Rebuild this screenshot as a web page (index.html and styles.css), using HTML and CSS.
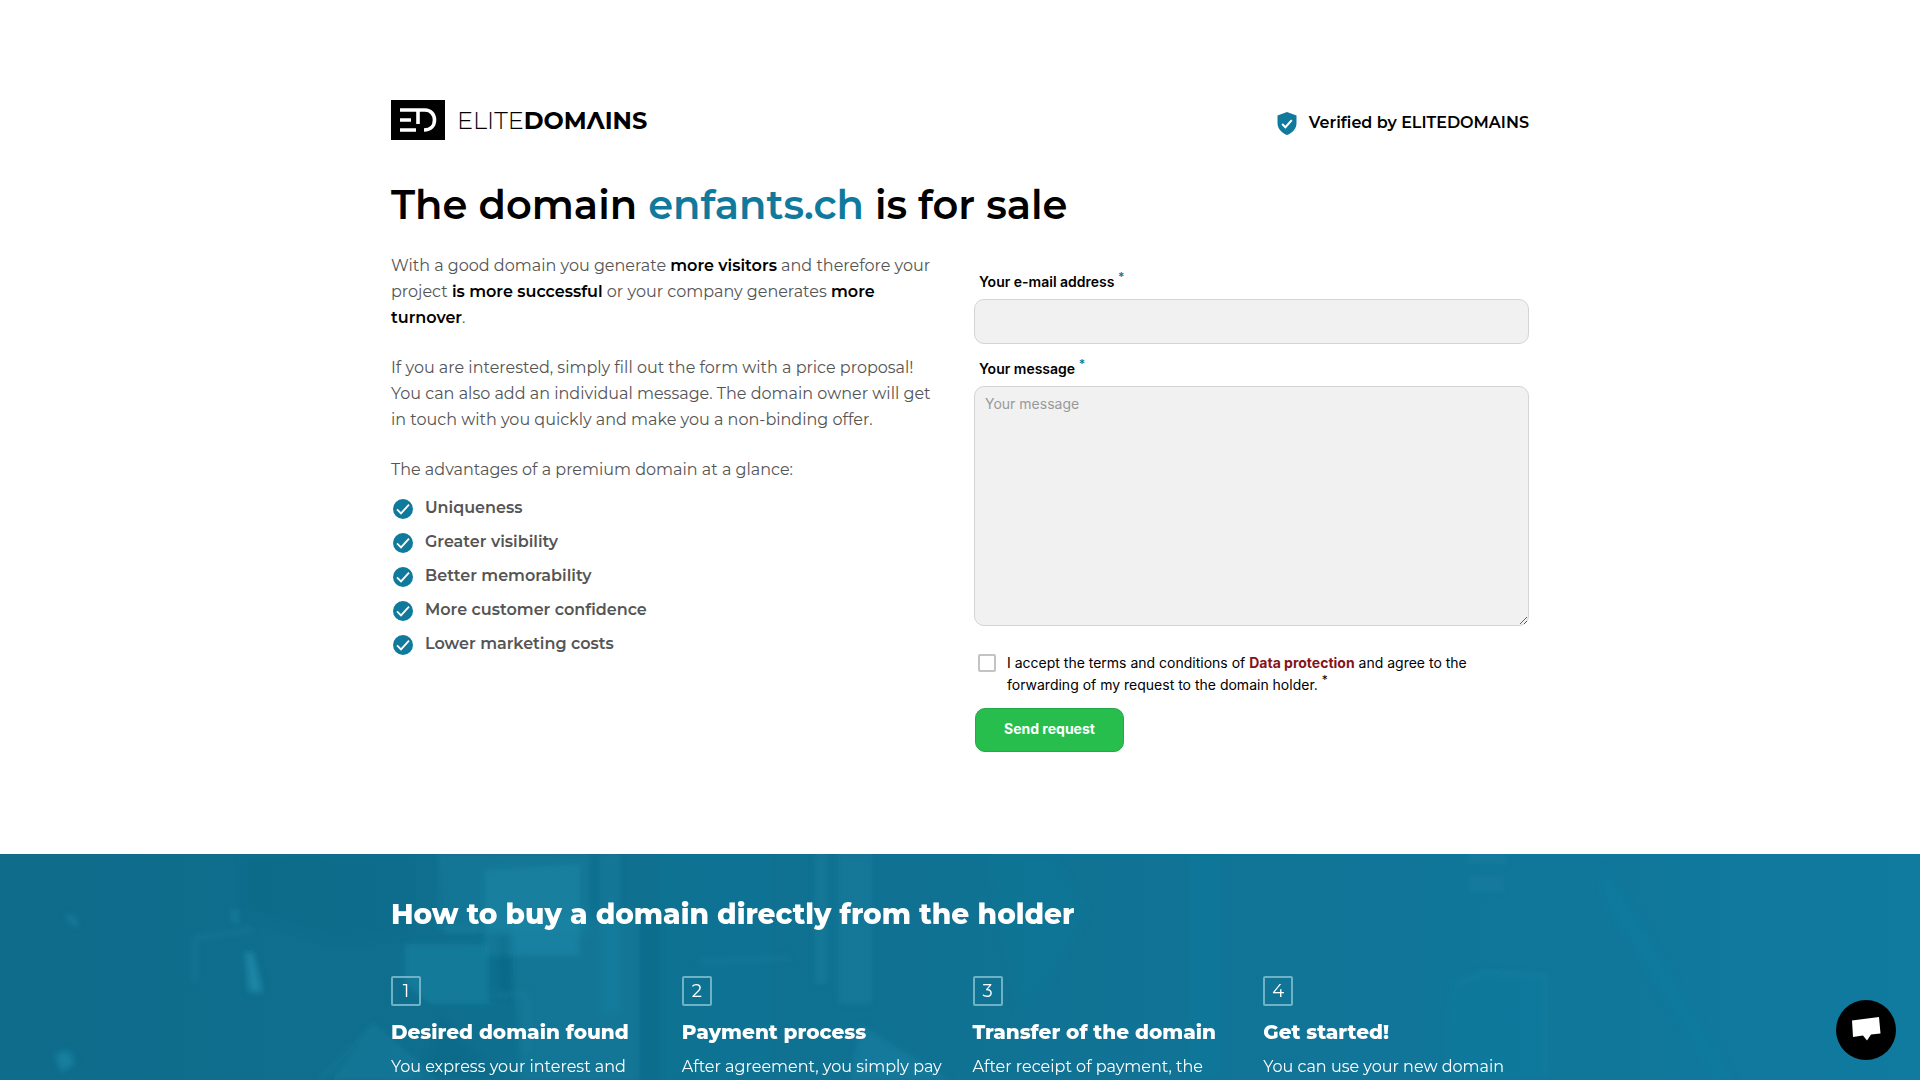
FILE: index.html
```
<!DOCTYPE html>
<html lang="en">
<head>
  <meta charset="UTF-8">
  <meta name="viewport" content="width=device-width, initial-scale=1.0">
  <title>enfants.ch is for sale</title>
  <link rel="stylesheet" href="styles.css">
</head>
<body>
  <svg class="sprite" aria-hidden="true">
    <symbol id="check" viewBox="0 0 20 20">
      <circle cx="10" cy="10" r="10" fill="#107a9d"/>
      <path d="M4 10.400l4 4 8-8.800" fill="none" stroke="#fff" stroke-width="1.800"/>
    </symbol>
  </svg>

  <main class="offer container">
    <header class="header">
      <a class="logo" href="#">
        <svg class="logo-mark" viewBox="0 0 54 40" aria-hidden="true">
          <rect width="54" height="40"/>
          <path d="M9 10h25c6 0 9.500 4.500 9.500 10s-3.500 10-10.500 10M9 20h11M9 30h16M27 11v13" fill="none" stroke="#fff" stroke-width="3.600"/>
        </svg>
        <span class="logo-text">ELITE<b>DOMΛINS</b></span>
      </a>
      <div class="verified">
        <svg class="shield" viewBox="0 0 20 23" aria-hidden="true">
          <path d="M10 0l9.500 3.500v7.500c0 5.500-4 10-9.500 12C4.500 21 .5 16.500.5 11V3.500z" fill="#107a9d"/>
          <path d="M5.200 12l3.200 3.200 6.400-7" fill="none" stroke="#fff" stroke-width="2"/>
        </svg>
        Verified by ELITEDOMAINS
      </div>
    </header>

    <h1>The domain <span class="domain">enfants.ch</span> is for sale</h1>

    <div class="columns">
      <div class="intro">
        <p>With a good domain you generate <strong>more visitors</strong> and therefore your project <strong>is more successful</strong> or your company generates <strong>more turnover</strong>.</p>
        <p>If you are interested, simply fill out the form with a price proposal! You can also add an individual message. The domain owner will get in touch with you quickly and make you a non-binding offer.</p>
        <p>The advantages of a premium domain at a glance:</p>
        <ul class="advantages">
          <li><svg class="check"><use href="#check"/></svg>Uniqueness</li>
          <li><svg class="check"><use href="#check"/></svg>Greater visibility</li>
          <li><svg class="check"><use href="#check"/></svg>Better memorability</li>
          <li><svg class="check"><use href="#check"/></svg>More customer confidence</li>
          <li><svg class="check"><use href="#check"/></svg>Lower marketing costs</li>
        </ul>
      </div>

      <form class="form">
        <label class="label" for="email">Your e-mail address <sup>*</sup></label>
        <input class="field" type="email" id="email" required>
        <label class="label" for="message">Your message <sup>*</sup></label>
        <textarea class="field message" id="message" placeholder="Your message" required></textarea>
        <div class="accept">
          <input class="checkbox" type="checkbox" id="accept" required>
          <label for="accept">I accept the terms and conditions of <a href="#">Data protection</a> and agree to the forwarding of my request to the domain holder. <sup>*</sup></label>
        </div>
        <button class="send" type="submit">Send request</button>
      </form>
    </div>
  </main>

  <section class="how">
    <!-- faint aerial city view -->
    <svg class="city" viewBox="0 0 1920 226" preserveAspectRatio="xMidYMin slice" aria-hidden="true">
      <defs>
        <filter id="soft"><feGaussianBlur stdDeviation="3"/></filter>
        <linearGradient id="shade">
          <stop offset="0" stop-color="#0f6c8b"/>
          <stop offset=".5" stop-color="#107293"/>
          <stop offset="1" stop-color="#107a9f"/>
        </linearGradient>
      </defs>
      <rect width="1920" height="226" fill="url(#shade)"/>
      <g filter="url(#soft)" fill="#1f8cab">
        <path d="M485 16l95-6v92h-95z" opacity=".45"/>
        <path d="M440 0h150v80H445z" opacity=".25"/>
        <path d="M405 90h85v60h-60l-25-20z" opacity=".4"/>
        <path d="M510 65h130v161H520z" opacity=".22"/>
        <path d="M600 0h20v160h-20zM815 0h12v130h-12zM838 0h34v150h-34z" opacity=".25"/>
        <path d="M375 170l65 56H330z" opacity=".25"/>
        <path d="M660 0h110v226H660z" opacity=".1"/>
        <path d="M860 170l90 56H850z" opacity=".3"/>
        <path d="M985 0h70l35 60-40 70-30 40z" opacity=".08"/>
        <path d="M1188 0h32v226h-32z" opacity=".12"/>
        <path d="M1450 125l35-8 60 4v105h-100z" opacity=".12"/>
        <path d="M1605 10l130 216h-20L1600 40z" opacity=".12"/>
        <path d="M245 98l8 0 10 40h-14z" opacity=".8"/>
        <path d="M65 62l6-2 8 10-4 3zM232 55h6v14h-6z" opacity=".5"/>
        <path d="M55 200l14-4 6 14-14 8z" opacity=".6"/>
        <path d="M1468 0h38v10h-38zM1470 22h34v16h-34z" opacity=".2"/>
      </g>
      <g filter="url(#soft)" fill="#0b5f7d">
        <path d="M240 0h170v80l-70 10-100-30z" opacity=".12"/>
        <path d="M490 80h20v60h-20z" opacity=".3"/>
        <path d="M640 60h20v166h-20z" opacity=".15"/>
        <path d="M440 160l60 66h-80z" opacity=".2"/>
      </g>
      <g filter="url(#soft)" fill="none" stroke="#2b91ae" stroke-width="4" opacity=".25">
        <path d="M195 128V84l58-8M440 0v75h40M495 80v60h32v60"/>
        <path d="M320 226l55-56M700 108l90-4M1458 130l28-12 60 4v100"/>
      </g>
    </svg>
    <div class="how-inner container">
      <h2>How to buy a domain directly from the holder</h2>
      <ol class="steps">
        <li>
          <span class="number">1</span>
          <h3>Desired domain found</h3>
          <p>You express your interest and</p>
        </li>
        <li>
          <span class="number">2</span>
          <h3>Payment process</h3>
          <p>After agreement, you simply pay</p>
        </li>
        <li>
          <span class="number">3</span>
          <h3>Transfer of the domain</h3>
          <p>After receipt of payment, the</p>
        </li>
        <li>
          <span class="number">4</span>
          <h3>Get started!</h3>
          <p>You can use your new domain</p>
        </li>
      </ol>
    </div>
  </section>

  <button class="chat" type="button" aria-label="Open chat">
    <svg viewBox="0 0 60 60" aria-hidden="true">
      <path d="M16 20.500l27-3.500 1.500 16.500-9.500 1-4 6-4-5-10 1.500z" fill="#fff"/>
    </svg>
  </button>
</body>
</html>
```
FILE: styles.css
```
* {
  margin: 0;
  padding: 0;
  box-sizing: border-box;
}

body {
  font-family: Montserrat, Inter, sans-serif;
  font-size: 16px;
  line-height: 26px;
  color: #555;
  background: #fff;
  min-height: 100vh;
  display: flex;
  flex-direction: column;
}

.sprite {
  display: none;
}

.container {
  width: 100%;
  max-width: 1170px;
  margin: 0 auto;
  padding: 0 16px;
}

.offer {
  padding-top: 100px;
  padding-bottom: 102px;
}

.header {
  display: flex;
  justify-content: space-between;
  align-items: center;
}

.logo {
  display: flex;
  align-items: center;
  gap: 12px;
  color: #000;
  text-decoration: none;
}

.logo-mark {
  width: 54px;
  height: 40px;
}

.logo-text {
  padding-top: 2px;
  font-size: 24px;
  font-weight: 300;
}

.logo-text b {
  font-weight: 700;
}

.verified {
  display: flex;
  align-items: center;
  gap: 12px;
  padding-top: 6px;
  color: #000;
  font-weight: 600;
}

.shield {
  width: 20px;
  height: 23px;
}

h1 {
  margin-top: 40px;
  font-size: 40px;
  line-height: 50px;
  font-weight: 600;
  color: #000;
}

.domain {
  color: #107a9d;
}

.columns {
  display: grid;
  grid-template-columns: 1fr 1fr;
  gap: 28px;
  margin-top: 23px;
}

.intro p {
  margin-bottom: 24px;
}

.intro strong {
  font-weight: 600;
  color: #000;
}

.advantages {
  list-style: none;
  margin-top: -16px;
}

.advantages li {
  display: flex;
  align-items: center;
  gap: 12px;
  height: 34px;
  padding-left: 2px;
  font-weight: 600;
}

.check {
  width: 20px;
  height: 20px;
  margin-top: 2px;
}

.form {
  padding-top: 15px;
  font-family: Inter, sans-serif;
  font-size: 14px;
  line-height: 22px;
  color: #000;
}

.form sup {
  font-size: 12px;
  line-height: 0;
}

.label {
  display: block;
  padding: 3px 5px 6px;
  font-weight: 600;
}

.label sup {
  color: #107a9d;
}

.field {
  display: block;
  width: 100%;
  height: 45px;
  margin-bottom: 11px;
  padding: 6px 10px;
  font: inherit;
  color: #000;
  background: #f1f1f1;
  border: 1px solid #d4d4d4;
  border-radius: 10px;
}

.message {
  height: 240px;
  resize: vertical;
}

.field::placeholder {
  color: #999;
}

.accept {
  display: flex;
  align-items: flex-start;
  gap: 11px;
  margin-top: 26px;
  padding: 0 40px 0 4px;
}

.checkbox {
  appearance: none;
  flex: none;
  width: 18px;
  height: 18px;
  margin-top: 2px;
  background: #fff;
  border: 2px solid #c3c3c3;
  border-radius: 2px;
}

.accept a {
  color: #85141b;
  font-weight: 700;
  text-decoration: none;
}

.send {
  height: 44px;
  margin: 12px 0 0 1px;
  padding: 0 28px 2px;
  font: inherit;
  font-weight: 700;
  color: #fff;
  background: #27be4d;
  border: 1px solid #25a847;
  border-radius: 10px;
  cursor: pointer;
}

.how {
  position: relative;
  flex: 1;
  color: #fff;
  background: #107394;
  overflow: hidden;
}

.city {
  position: absolute;
  inset: 0;
  width: 100%;
  height: 100%;
}

.how-inner {
  position: relative;
  padding-top: 40px;
}

h2 {
  font-size: 28px;
  line-height: 40px;
  font-weight: 800;
}

.steps {
  display: grid;
  grid-template-columns: repeat(4, 1fr);
  gap: 25px;
  margin-top: 42px;
  list-style: none;
}

.number {
  display: block;
  width: 30px;
  height: 30px;
  font-size: 18px;
  line-height: 26px;
  text-align: center;
  border: 2px solid #6fb2c6;
  border-radius: 2px;
}

h3 {
  margin-top: 12px;
  font-size: 20px;
  line-height: 28px;
  font-weight: 800;
}

.steps p {
  margin-top: 8px;
}

.chat {
  position: fixed;
  right: 24px;
  bottom: 20px;
  width: 60px;
  height: 60px;
  background: #000;
  border: 0;
  border-radius: 50%;
  cursor: pointer;
}

@media (max-width: 800px) {
  .columns,
  .steps {
    grid-template-columns: 1fr;
  }
}
```
